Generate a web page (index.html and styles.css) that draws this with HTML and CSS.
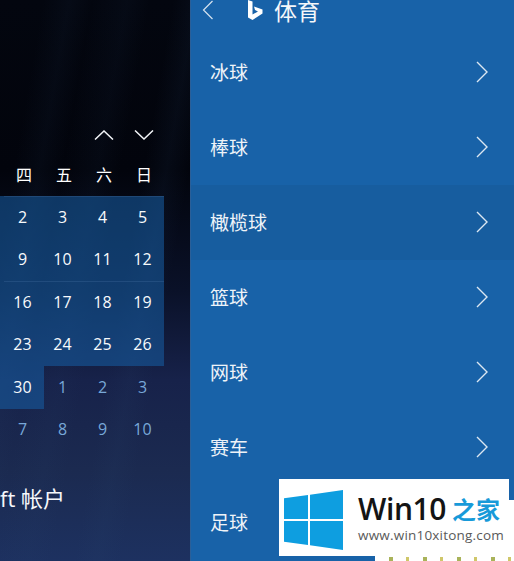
FILE: index.html
```html
<!DOCTYPE html>
<html lang="zh">
<head>
<meta charset="utf-8">
<title>体育</title>
<link rel="stylesheet" href="styles.css">
</head>
<body>
<div class="app">
  <section class="cal">
    <div class="nav">
      <svg class="navicon" viewBox="0 0 20 10"><path d="M1 9.500 10 1l9 8.500"/></svg>
      <svg class="navicon" viewBox="0 0 20 10"><path d="M1 .5 10 9l9-8.500"/></svg>
    </div>
    <div class="week"><span>四</span><span>五</span><span>六</span><span>日</span></div>
    <div class="days">
      <span class="d in top">2</span><span class="d in top">3</span><span class="d in top">4</span><span class="d in top">5</span>
      <span class="d in">9</span><span class="d in">10</span><span class="d in">11</span><span class="d in">12</span>
      <span class="d in top">16</span><span class="d in top">17</span><span class="d in top">18</span><span class="d in top">19</span>
      <span class="d in">23</span><span class="d in">24</span><span class="d in">25</span><span class="d in">26</span>
      <span class="d in">30</span><span class="d out">1</span><span class="d out">2</span><span class="d out">3</span>
      <span class="d out">7</span><span class="d out">8</span><span class="d out">9</span><span class="d out">10</span>
    </div>
    <div class="account">ft 帐户</div>
  </section>
  <section class="panel">
    <header class="head">
      <svg class="back" viewBox="0 0 12 20"><path d="M10.500 1 1.500 10l9 9"/></svg>
      <svg class="bing" viewBox="0 0 16 21"><path d="M1 0 5.500 1.500V14.500L11 11.500 8 10 7 6.500 15.500 9.500V13.500L5.500 20 1 17.500Z"/></svg>
      <span class="title">体育</span>
    </header>
    <ul class="list">
      <li class="row"><span>冰球</span><svg class="chev" viewBox="0 0 12 22"><path d="M1 1 11 11 1 21"/></svg></li>
      <li class="row"><span>棒球</span><svg class="chev" viewBox="0 0 12 22"><path d="M1 1 11 11 1 21"/></svg></li>
      <li class="row hover"><span>橄榄球</span><svg class="chev" viewBox="0 0 12 22"><path d="M1 1 11 11 1 21"/></svg></li>
      <li class="row"><span>篮球</span><svg class="chev" viewBox="0 0 12 22"><path d="M1 1 11 11 1 21"/></svg></li>
      <li class="row"><span>网球</span><svg class="chev" viewBox="0 0 12 22"><path d="M1 1 11 11 1 21"/></svg></li>
      <li class="row"><span>赛车</span><svg class="chev" viewBox="0 0 12 22"><path d="M1 1 11 11 1 21"/></svg></li>
      <li class="row"><span>足球</span><svg class="chev" viewBox="0 0 12 22"><path d="M1 1 11 11 1 21"/></svg></li>
    </ul>
  </section>
</div>
<div class="wm-back"></div>
<div class="wm">
  <svg class="winlogo" viewBox="0 0 60 60"><path d="M0 8.300 24 5V29H0ZM26 4.700 59 0V29H26ZM0 31H24V55L0 51.700ZM26 31H59V60L26 55.300Z"/></svg>
  <div class="wm-text">
    <div class="wm-title"><b>Win10</b><span>之家</span></div>
    <div class="wm-url">www.win10xitong.com</div>
  </div>
</div>
</body>
</html>
```
FILE: styles.css
```css
* { box-sizing: border-box; }
html, body { margin: 0; padding: 0; height: 100%; overflow: hidden; }
body { font-family: "Open Sans", "Noto Sans CJK SC", sans-serif; color: #fff; position: relative; }
.app { display: flex; width: 514px; height: 561px; }

.cal {
  width: 190px;
  flex: none;
  padding: 115px 0 0 4px;
  overflow: hidden;
  background:
    linear-gradient(100deg, transparent 60%, rgba(40,70,110,.1) 68%, transparent 76%),
    linear-gradient(100deg, transparent 15%, rgba(40,70,110,.08) 24%, transparent 32%, rgba(40,70,110,.07) 44%, transparent 52%),
    linear-gradient(180deg, #03060f 0, #02040c 170px, #0a1128 290px, #17224a 380px, #1b2a50 470px, #1d3160 561px);
}
.nav { display: grid; grid-template-columns: repeat(4, 40px); height: 40px; align-items: center; justify-items: center; }
.navicon { width: 20px; height: 10px; fill: none; stroke: #f2f4f7; stroke-width: 1.5; }
.navicon:first-child { grid-column: 3; }
.week { display: grid; grid-template-columns: repeat(4, 40px); height: 41px; align-items: center; font: 400 16px/1 "Noto Sans CJK SC", sans-serif; text-align: center; color: #fff; padding-bottom: 3px; }
.days { display: grid; grid-template-columns: repeat(4, 40px); grid-auto-rows: 42.5px; margin-left: -4px; padding-left: 4px; width: 164px; position: relative; font-size: 16px; text-align: center; }
.d { display: flex; align-items: center; justify-content: center; padding: 0 3px 1px 0; }
.d.in { background: rgba(22,92,160,.58); color: #f8fafc; }
.d.top { box-shadow: inset 0 1px 0 rgba(110,150,200,.18); }
.d.out { color: #78a8d8; }
.days::before { content: ""; position: absolute; left: 0; top: 0; width: 4px; height: 212.5px; background: rgba(22,92,160,.58); }
.account { margin-top: 27px; margin-left: -4px; font: 400 22px/40px "Open Sans", "Noto Sans CJK SC", sans-serif; color: #f6f8fb; white-space: nowrap; }

.panel { flex: 1; background: #1862a8; border-left: 1px solid #2b5f98; overflow: hidden; }
.head { display: flex; align-items: center; height: 20px; margin-bottom: 15px; padding-left: 11px; }
.back { width: 12px; height: 20px; fill: none; stroke: #d5e2ef; stroke-width: 1.2; }
.bing { width: 16px; height: 21px; margin-left: 33px; fill: #fff; }
.title { margin-left: 11px; font: 400 23px/20px "Noto Sans CJK SC", sans-serif; color: #f4f7fa; }
.list { list-style: none; margin: 0; padding: 0; }
.row { display: flex; align-items: center; justify-content: space-between; height: 75px; padding: 0 26px 2px 19px; font: 400 19px/1 "Noto Sans CJK SC", sans-serif; color: #eef3f8; }
.row.hover { background: #175d9f; }
.chev { width: 12px; height: 22px; fill: none; stroke: #dbe7f2; stroke-width: 1.4; }

.wm-back {
  position: absolute; left: 375px; top: 500px; width: 139px; height: 61px;
  background:
    repeating-linear-gradient(90deg, transparent 0 14px, #a9b35a 14px 18px, transparent 18px 31px, #cfc76a 31px 34px) 0 100% / 100% 4px no-repeat,
    #fff;
}
.wm { position: absolute; left: 279px; top: 479px; width: 230px; height: 77px; background: #fff; display: flex; padding: 11px 0 0 5px; }
.winlogo { width: 60px; height: 60px; fill: #0e9ee0; flex: none; }
.wm-text { margin-left: 14px; }
.wm-title { display: flex; align-items: center; height: 34px; margin-top: 2px; color: #141414; gap: 6px; }
.wm-title b { font: 600 30px/28px "Open Sans", sans-serif; letter-spacing: -.4px; }
.wm-title span { font: 700 24px/28px "Noto Sans CJK SC", sans-serif; color: #179ad9; }
.wm-url { font: 13.5px/16px "Open Sans", sans-serif; color: #5a5a5a; white-space: nowrap; margin-top: 1px; letter-spacing: .2px; }
```
